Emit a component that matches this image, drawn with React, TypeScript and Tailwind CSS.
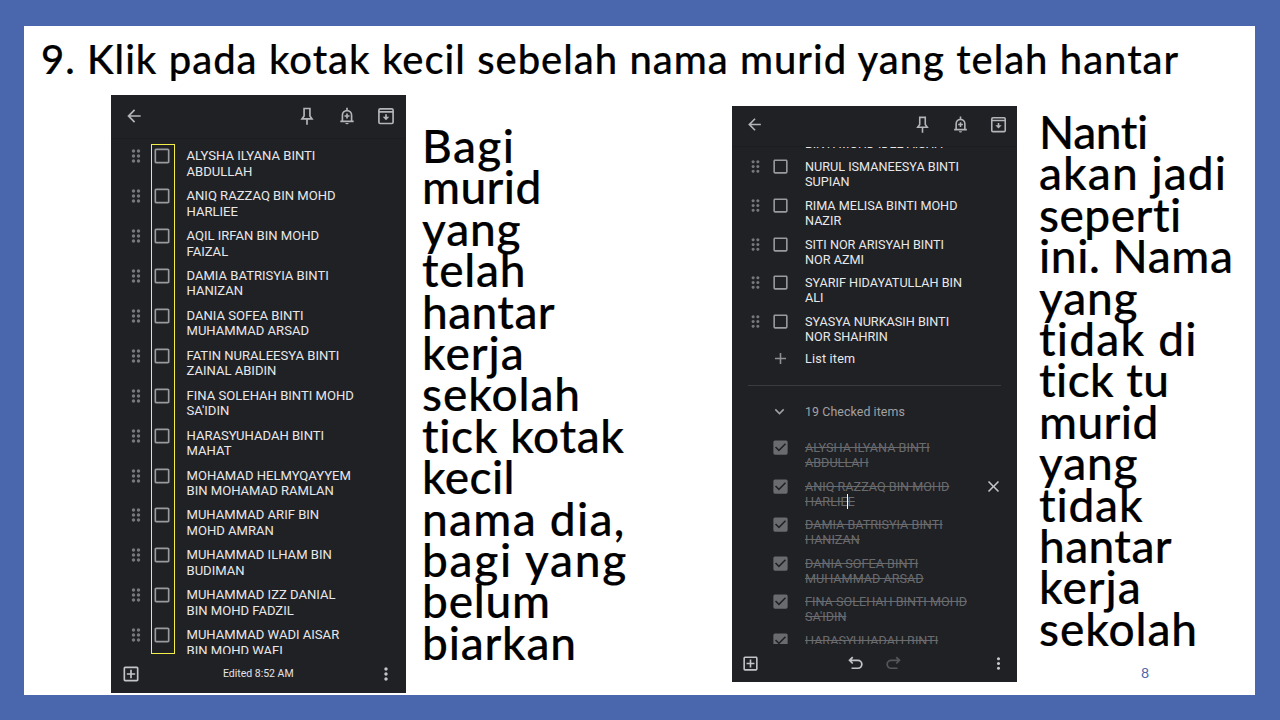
import {
  MdAdd,
  MdArrowBack,
  MdCheckBox,
  MdCheckBoxOutlineBlank,
  MdClose,
  MdDragIndicator,
  MdExpandMore,
  MdMoreVert,
  MdOutlineAddBox,
} from "react-icons/md";

const students = [
  ["ALYSHA ILYANA BINTI", "ABDULLAH"],
  ["ANIQ RAZZAQ BIN MOHD", "HARLIEE"],
  ["AQIL IRFAN BIN MOHD", "FAIZAL"],
  ["DAMIA BATRISYIA BINTI", "HANIZAN"],
  ["DANIA SOFEA BINTI", "MUHAMMAD ARSAD"],
  ["FATIN NURALEESYA BINTI", "ZAINAL ABIDIN"],
  ["FINA SOLEHAH BINTI MOHD", "SA'IDIN"],
  ["HARASYUHADAH BINTI", "MAHAT"],
  ["MOHAMAD HELMYQAYYEM", "BIN MOHAMAD RAMLAN"],
  ["MUHAMMAD ARIF BIN", "MOHD AMRAN"],
  ["MUHAMMAD ILHAM BIN", "BUDIMAN"],
  ["MUHAMMAD IZZ DANIAL", "BIN MOHD FADZIL"],
  ["MUHAMMAD WADI AISAR", "BIN MOHD WAFI"],
];

const unchecked = [
  ["NURUL ISMANEESYA BINTI", "SUPIAN"],
  ["RIMA MELISA BINTI MOHD", "NAZIR"],
  ["SITI NOR ARISYAH BINTI", "NOR AZMI"],
  ["SYARIF HIDAYATULLAH BIN", "ALI"],
  ["SYASYA NURKASIH BINTI", "NOR SHAHRIN"],
];

const checked = [
  ["ALYSHA ILYANA BINTI", "ABDULLAH"],
  ["ANIQ RAZZAQ BIN MOHD", "HARLIEE"],
  ["DAMIA BATRISYIA BINTI", "HANIZAN"],
  ["DANIA SOFEA BINTI", "MUHAMMAD ARSAD"],
  ["FINA SOLEHAH BINTI MOHD", "SA'IDIN"],
  ["HARASYUHADAH BINTI", "MAHAT"],
];

const leftLines = [
  { text: "Bagi", spacing: "tracking-[1.4px]" },
  { text: "murid", spacing: "tracking-[0.4px]" },
  { text: "yang", spacing: "tracking-[0.8px]" },
  { text: "telah", spacing: "tracking-[0.7px]" },
  { text: "hantar", spacing: "tracking-[0.4px]" },
  { text: "kerja", spacing: "tracking-[1px]" },
  { text: "sekolah", spacing: "tracking-[0.9px]" },
  { text: "tick kotak", spacing: "tracking-[0.6px]" },
  { text: "kecil", spacing: "tracking-[0.4px]" },
  { text: "nama dia,", spacing: "tracking-[1.3px]" },
  { text: "bagi yang", spacing: "tracking-[1.7px]" },
  { text: "belum", spacing: "tracking-[0.8px]" },
  { text: "biarkan", spacing: "tracking-[0.8px]" },
];

const rightLines = [
  { text: "Nanti", spacing: "tracking-[-0.4px]" },
  { text: "akan jadi", spacing: "tracking-[1.1px]" },
  { text: "seperti", spacing: "tracking-[0.5px]" },
  { text: "ini. Nama", spacing: "tracking-[0.6px]" },
  { text: "yang", spacing: "tracking-[0.8px]" },
  { text: "tidak di", spacing: "tracking-[1.2px]" },
  { text: "tick tu", spacing: "tracking-[0.4px]" },
  { text: "murid", spacing: "tracking-[0.4px]" },
  { text: "yang", spacing: "tracking-[0.8px]" },
  { text: "tidak", spacing: "tracking-[0.8px]" },
  { text: "hantar", spacing: "tracking-[0.4px]" },
  { text: "kerja", spacing: "tracking-[1px]" },
  { text: "sekolah", spacing: "tracking-[0.9px]" },
];

function PinIcon() {
  return (
    <svg viewBox="0 0 24 24" className="size-full" fill="none" stroke="currentColor" strokeWidth="2">
      <path d="M7.500 3h9M8.500 3v9L6 15.500h12L15.500 12V3M12 15.500v7" />
    </svg>
  );
}

function BellIcon() {
  return (
    <svg viewBox="0 0 24 24" className="size-full" fill="none" stroke="currentColor" strokeWidth="2">
      <path d="M4 18.500h16M6.500 18.500V11a5.500 5.500 0 0 1 11 0v7.500M12 2v4M12 9v6M9 12h6" />
      <path d="M10 20.500a2 1.500 0 0 0 4 0z" fill="currentColor" stroke="none" />
    </svg>
  );
}

function ArchiveIcon() {
  return (
    <svg viewBox="0 0 24 24" className="size-full" fill="none" stroke="currentColor" strokeWidth="2">
      <rect x="3.500" y="3.500" width="17" height="17.500" rx="1.500" />
      <path d="M3 7h18M12 10v5" />
      <path d="M8 13h8l-4 4z" fill="currentColor" stroke="none" />
    </svg>
  );
}

function UndoIcon() {
  return (
    <svg viewBox="0 0 24 24" className="size-full" fill="none" stroke="currentColor" strokeWidth="2.2">
      <path d="M8.500 4L4.500 8l4 4M5 8h10a5 5 0 0 1 0 10H7" />
    </svg>
  );
}

function NoteLines({ lines }: { lines: { text: string; spacing: string }[] }) {
  return (
    <div className="text-[46px] leading-[41.400px] whitespace-nowrap [-webkit-text-stroke:0.2px_black]">
      {lines.map((line, i) => (
        <p key={i} className={line.spacing}>
          {line.text}
        </p>
      ))}
    </div>
  );
}

export default function App() {
  return (
    <div className="w-[1280px] h-[720px] overflow-hidden bg-[#4a66ac] pl-6 pt-[26px] pr-[25px] pb-[25px]">
      <div className="relative h-full bg-white font-['Lato','Liberation_Sans',sans-serif] font-medium text-black">
        <h1 className="h-[69px] pl-[17px] pt-[9px] text-[40px] leading-[48px] tracking-[0.960px] [word-spacing:0.300px] whitespace-nowrap [-webkit-text-stroke:0.2px_black]">
          9. Klik pada kotak kecil sebelah nama murid yang telah hantar
        </h1>

        <div className="flex items-start pl-[87px]">
          {/* Unchecked list */}
          <div className="relative flex w-[295px] h-[598px] shrink-0 flex-col bg-[#202125] font-['Roboto',sans-serif] font-normal text-[#e8e8ea]">
            <div className="flex h-[43px] justify-between pt-[11px] pl-[13px] pr-[10px] text-[#b4b5b8]">
              <MdArrowBack className="size-5" />
              <div className="flex gap-[19.500px]">
                <div className="size-5">
                  <PinIcon />
                </div>
                <div className="size-5">
                  <BellIcon />
                </div>
                <div className="size-5">
                  <ArchiveIcon />
                </div>
              </div>
            </div>
            <div className="h-[516px] overflow-hidden pt-[9.300px] border-t border-[#1c1d20]">
              {students.map((name) => (
                <div key={name[0]} className="flex h-[39.920px] items-start">
                  <MdDragIndicator className="ml-[14.500px] mt-[-2px] size-5 shrink-0 text-[#77787b]" />
                  <MdCheckBoxOutlineBlank className="ml-[6px] mt-[-2px] size-5 shrink-0 text-[#9a9b9e]" />
                  <div className="ml-[15px] text-[13.070px] leading-[15.400px] whitespace-nowrap">
                    <p>{name[0]}</p>
                    <p>{name[1]}</p>
                  </div>
                </div>
              ))}
            </div>
            <div className="flex grow items-center justify-between pl-[9.500px] pr-[10px] text-[#c4c5c8]">
              <MdOutlineAddBox className="size-5" />
              <span className="text-[10.500px] text-[#e3e3e5]">Edited 8:52 AM</span>
              <MdMoreVert className="size-5" />
            </div>
            <div className="absolute left-10 top-[49px] h-[510px] w-6 border border-[#f4ee4a]" />
          </div>

          <div className="ml-4 mt-[30px] w-[310px]">
            <NoteLines lines={leftLines} />
          </div>

          {/* List with checked items */}
          <div className="mt-[11px] flex w-[285px] h-[576px] shrink-0 flex-col bg-[#202125] font-['Roboto',sans-serif] font-normal text-[#e8e8ea]">
            <div className="flex h-[40px] justify-between pt-[9px] pl-[12.500px] pr-[9.500px] text-[#b4b5b8]">
              <MdArrowBack className="size-[19px]" />
              <div className="flex gap-[19px]">
                <div className="size-[19px]">
                  <PinIcon />
                </div>
                <div className="size-[19px]">
                  <BellIcon />
                </div>
                <div className="size-[19px]">
                  <ArchiveIcon />
                </div>
              </div>
            </div>
            <div className="h-[498px] overflow-hidden border-t border-[#1c1d20]">
              <p className="-mt-[11px] ml-[73px] h-[23.400px] text-[12.400px] leading-[15px]">BINTI MOHD IDEE AISHA</p>
              {unchecked.map((name) => (
                <div key={name[0]} className="flex h-[38.600px] items-start">
                  <MdDragIndicator className="ml-[14px] mt-[-2px] size-[19px] shrink-0 text-[#77787b]" />
                  <MdCheckBoxOutlineBlank className="ml-[6px] mt-[-2px] size-[19px] shrink-0 text-[#9a9b9e]" />
                  <div className="ml-[15px] text-[12.650px] leading-[15px] whitespace-nowrap">
                    <p>{name[0]}</p>
                    <p>{name[1]}</p>
                  </div>
                </div>
              ))}
              <div className="flex h-[32.600px] items-start text-[12.600px] leading-[15px]">
                <MdAdd className="ml-[39px] mt-[-3px] size-[19px] text-[#8f9093]" />
                <p className="ml-[15px] -mt-px tracking-[0.200px]">List item</p>
              </div>
              <div className="mx-4 border-t border-[#3a3b3e]" />
              <div className="flex h-[54.400px] items-start pt-[16px] text-[12.400px] leading-[15px] text-[#a0a1a4]">
                <MdExpandMore className="ml-[38px] size-[19px]" />
                <p className="ml-4 mt-[2px] tracking-[0.080px]">19 Checked items</p>
              </div>
              {checked.map((name, i) => (
                <div key={name[0]} className="flex h-[38.500px] items-start text-[#6a6b6e]">
                  <MdCheckBox className="ml-[39px] mt-[-2px] size-[19px] shrink-0" />
                  <div className="ml-[15px] w-[179px] text-[12.650px] leading-[15px] whitespace-nowrap">
                    <p className="line-through">{name[0]}</p>
                    <p className="relative w-fit line-through">
                      {name[1]}
                      {i === 1 && <span className="absolute right-[7px] top-0 h-[15px] w-px bg-white" />}
                    </p>
                  </div>
                  {i === 1 && <MdClose className="-mt-[2px] size-[19px] text-[#c4c5c8]" />}
                </div>
              ))}
            </div>
            <div className="flex grow items-center justify-between pl-[9px] pr-[9.500px] text-[#c4c5c8]">
              <MdOutlineAddBox className="size-[19px]" />
              <div className="flex gap-[19px]">
                <div className="size-[19px]">
                  <UndoIcon />
                </div>
                <div className="size-[19px] -scale-x-100 text-[#55565a]">
                  <UndoIcon />
                </div>
              </div>
              <MdMoreVert className="size-[19px]" />
            </div>
          </div>

          <div className="ml-[22px] mt-4">
            <NoteLines lines={rightLines} />
          </div>
        </div>

        <span className="absolute left-[1117px] top-[638px] text-[14px] leading-[18px] font-normal text-[#4a66ac]">8</span>
      </div>
    </div>
  );
}
